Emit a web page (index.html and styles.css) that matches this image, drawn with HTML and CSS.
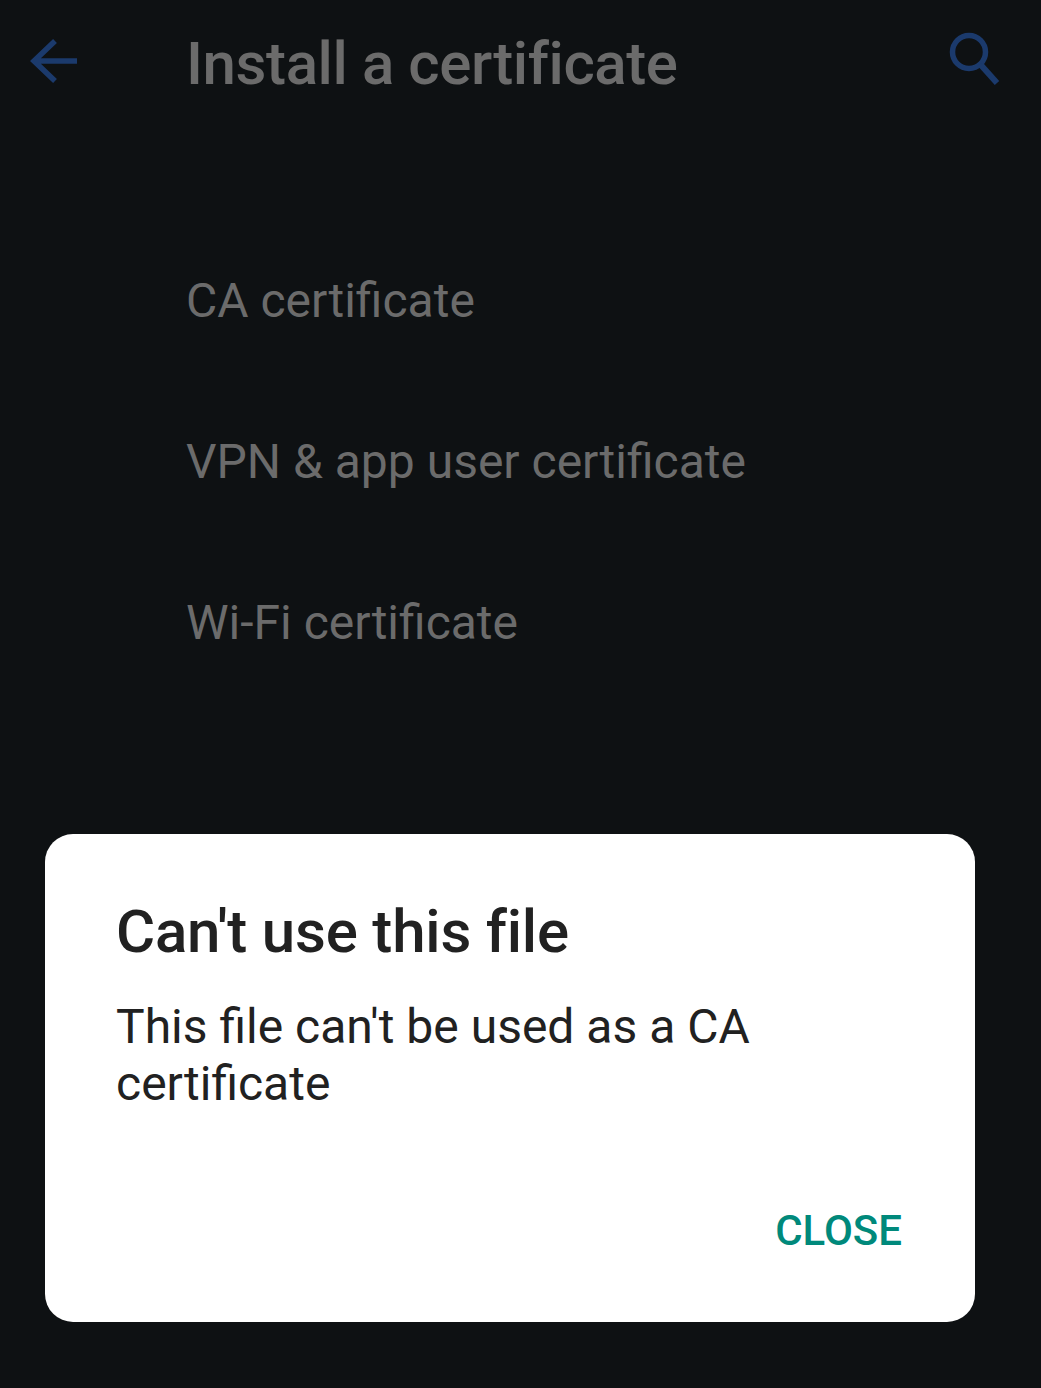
FILE: index.html
```html
<!DOCTYPE html>
<html>
<head>
<meta charset="utf-8">
<link rel="stylesheet" href="styles.css">
</head>
<body>
<div class="screen">
  <header class="appbar">
    <svg class="back" width="56" height="56" viewBox="0 0 56 56">
      <path d="M50 26 H8 M28 6 L7 26 L28 46" fill="none" stroke="#1b3a6c" stroke-width="5.5" stroke-linejoin="miter"/>
    </svg>
    <h1 class="title">Install a certificate</h1>
    <svg class="search" width="60" height="60" viewBox="0 0 60 60">
      <circle cx="24" cy="24" r="16.5" fill="none" stroke="#1b3a6c" stroke-width="5.5"/>
      <path d="M35 36 L52 55" fill="none" stroke="#1b3a6c" stroke-width="6"/>
    </svg>
  </header>
  <ul class="list">
    <li>CA certificate</li>
    <li>VPN &amp; app user certificate</li>
    <li>Wi-Fi certificate</li>
  </ul>
  <div class="dialog">
    <h2 class="dtitle">Can't use this file</h2>
    <p class="dbody">This file can't be used as a CA certificate</p>
    <div class="actions"><span class="btn">CLOSE</span></div>
  </div>
</div>
</body>
</html>
```
FILE: styles.css
```css
html, body {
  margin: 0;
  padding: 0;
  background: #0e1113;
  font-family: Roboto, "Noto Sans", sans-serif;
}
.screen {
  width: 1041px;
  height: 1388px;
  overflow: hidden;
  display: flex;
  flex-direction: column;
}
.appbar {
  display: flex;
  align-items: center;
  height: 126px;
  padding: 0 0 0 27px;
}
.back {
  flex: none;
}
.title {
  margin: 0 0 0 103px;
  font-size: 60px;
  font-weight: 500;
  color: #6b6b6b;
  flex: 1;
  letter-spacing: -0.4px;
}
.search {
  flex: none;
  margin-right: 36px;
  margin-top: -10px;
}
.list {
  list-style: none;
  margin: 0;
  padding: 94px 0 0 0;
}
.list li {
  padding-left: 186px;
  font-size: 48px;
  color: #6b6b6b;
  height: 161px;
  line-height: 1;
  display: flex;
  align-items: center;
}
.dialog {
  margin: 131px 0 0 45px;
  width: 930px;
  height: 488px;
  box-sizing: border-box;
  background: #ffffff;
  border-radius: 28px;
  padding: 62px 73px 0 71px;
  display: flex;
  flex-direction: column;
}
.dtitle {
  margin: 0;
  font-size: 60px;
  font-weight: 500;
  color: #212121;
  line-height: 1.2;
  letter-spacing: -0.2px;
}
.dbody {
  margin: 30px 0 0 0;
  font-size: 48px;
  line-height: 57px;
  color: #212121;
  width: 650px;
}
.actions {
  display: flex;
  justify-content: flex-end;
  margin-top: 94px;
}
.btn {
  font-size: 42px;
  font-weight: 500;
  color: #00897b;
}
```
